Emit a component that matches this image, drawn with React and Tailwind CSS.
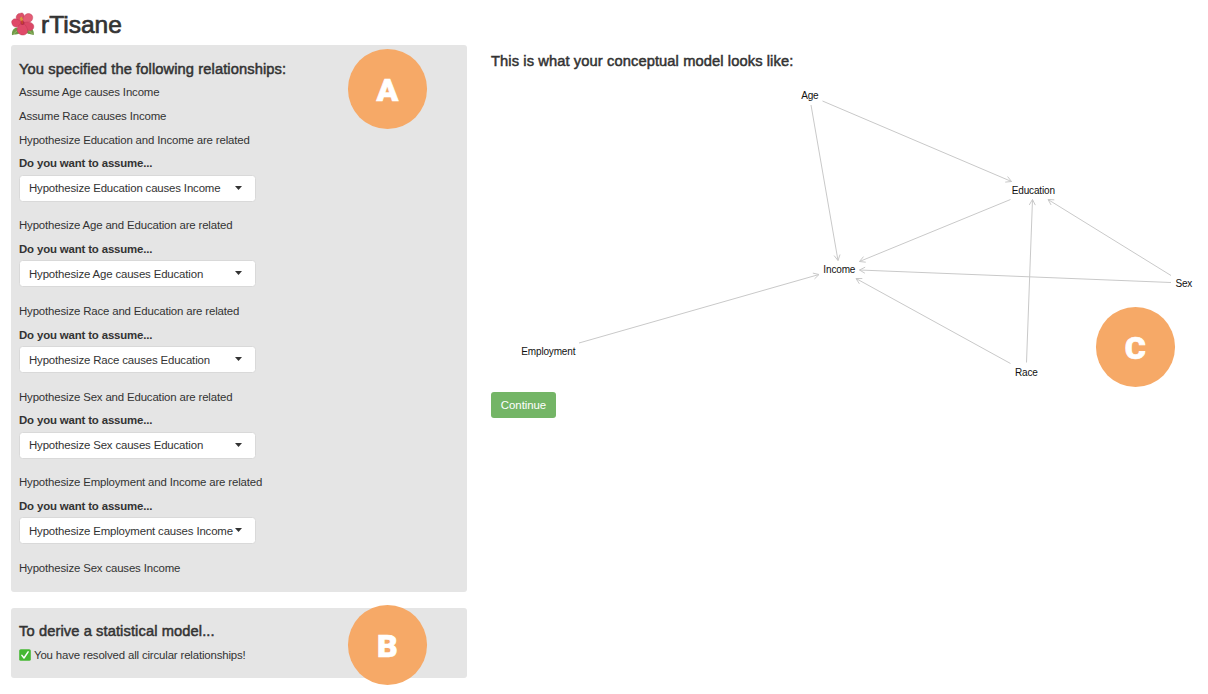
import React from "react";

const groups = [
  { text: "Hypothesize Education and Income are related", choice: "Hypothesize Education causes Income" },
  { text: "Hypothesize Age and Education are related", choice: "Hypothesize Age causes Education" },
  { text: "Hypothesize Race and Education are related", choice: "Hypothesize Race causes Education" },
  { text: "Hypothesize Sex and Education are related", choice: "Hypothesize Sex causes Education" },
  { text: "Hypothesize Employment and Income are related", choice: "Hypothesize Employment causes Income" },
];

// Diagram coordinates are relative to the canvas, whose origin is its top left corner.
const nodes = [
  { name: "Age", x: 318.8, y: 24 },
  { name: "Education", x: 542.3, y: 119 },
  { name: "Income", x: 348.3, y: 198 },
  { name: "Sex", x: 692.8, y: 212 },
  { name: "Employment", x: 57.3, y: 280 },
  { name: "Race", x: 535.3, y: 301 },
];

const edges = [
  [320, 34, 347, 189.5],
  [331.5, 30, 520.5, 110.5],
  [519.5, 128.5, 368.5, 190.5],
  [680, 204.5, 557, 128.5],
  [680, 211.5, 368.5, 199],
  [519.5, 292.5, 365, 207.5],
  [535.5, 291.5, 541.5, 128.5],
  [88, 272, 328, 203.5],
];

function arrow([x1, y1, x2, y2]) {
  const a = Math.atan2(y2 - y1, x2 - x1);
  const p = (t) => `${(x2 - 6.3 * Math.cos(a + t)).toFixed(2)} ${(y2 - 6.3 * Math.sin(a + t)).toFixed(2)}`;
  return `M${x1} ${y1}L${x2} ${y2}M${p(0.5)}L${x2} ${y2}L${p(-0.5)}`;
}

function Hibiscus() {
  return (
    <svg className="-mt-px h-6 w-6 shrink-0" viewBox="0 0 24 24">
      <path d="M1 23.2C.6 19.500 2 16 6 15.500L10 20C8 23 4.500 22 1 23.200Z" fill="#6f9a48" />
      <path d="M22.800 23C23.300 19 21.500 16.500 18 15L15 20C17.500 22.800 19.500 22 22.800 23Z" fill="#6f9a48" />
      <path d="M2.500 22L7 18M21.500 22L17.500 18" stroke="#a5c06b" strokeWidth="0.8" />
      <g stroke="#b93450" strokeWidth="0.400">
        <path d="M11 11C5.500 9 4 5.500 6 3C7 1.200 9 1.600 9.600 1.200C12 .2 13.500 2.500 13 4.500Z" fill="#dd5069" />
        <path d="M12 11C11.500 6 13.500 2 17 1.600C20.500 1.500 22.500 4 21.500 7C20.500 10.500 16.500 11.500 12 11Z" fill="#e45c75" />
        <path d="M11 11.500C8 7 3.500 5.600 1.500 8C-.2 10 1 11.500 1.500 13C3 16 8 15.500 11 12Z" fill="#df4867" />
        <path d="M12 11C16 9 21 10 22.500 13C23.600 16 21.500 18.500 19 18.500C15.500 18.500 12.500 15 12 11Z" fill="#db4766" />
        <path d="M11.500 11C7.500 12.500 5 16 6.500 19.500C8 22.500 10.500 23.500 13 23C16.500 22.200 17.500 19 16 16C15 13.500 13.500 12 11.500 11Z" fill="#df4a69" />
      </g>
      <circle cx="11.500" cy="11" r="2" fill="#b42a48" />
      <path d="M11.300 11L10.500 6" stroke="#c8472f" strokeWidth="1.800" strokeLinecap="round" />
      <path d="M8.800 6L10.800 4.500L12.200 8L9.800 9Z" fill="#d89a3c" />
    </svg>
  );
}

function CheckMark() {
  return (
    <svg className="-mt-px h-3 w-3 shrink-0" viewBox="0 0 12 12">
      <rect x="0.200" y="0.200" width="11.600" height="11.600" rx="1.600" fill="#45b833" />
      <path d="M2.900 6.400L5 9L9.100 2.900" fill="none" stroke="#fff" strokeWidth="1.500" strokeLinecap="round" strokeLinejoin="round" />
    </svg>
  );
}

function Badge({ letter, place }) {
  return (
    <div className={`absolute flex h-[79.500px] w-[79.500px] items-center justify-center rounded-full bg-[#f6a967] font-[Roboto,sans-serif] text-[32px] leading-none font-black text-white [-webkit-text-stroke:0.700px_#fff] ${place}`}>
      <span className="mt-[2px]">{letter}</span>
    </div>
  );
}

function Line({ children }) {
  return <p className="mb-[7.750px] h-4 whitespace-nowrap">{children}</p>;
}

function Group({ text, choice }) {
  return (
    <div className="mb-[15.700px]">
      <Line>{text}</Line>
      <label className="mb-[3.300px] block h-4 font-bold">Do you want to assume...</label>
      <button className="relative flex h-[27px] w-[237px] items-center rounded-[3.500px] border border-[#d9d9d9] bg-white pl-[9px] text-left whitespace-nowrap">
        {choice}
        <svg className="absolute top-[10px] right-[13.500px] h-1 w-[7px]" viewBox="0 0 7 4">
          <path d="M0 0H7L3.500 4Z" fill="#333" />
        </svg>
      </button>
    </div>
  );
}

const heading = "whitespace-nowrap text-[14.700px] leading-[18px] tracking-[0.095px] [-webkit-text-stroke:0.500px_#333]";

export default function App() {
  return (
    <div className="h-[694px] w-[1208px] overflow-hidden bg-white pl-[11px] font-['Liberation_Sans',Arial,sans-serif] text-[11.430px] leading-4 tracking-[-0.155px] text-[#333]">
      <header className="flex h-[45px] items-center gap-[6px] pt-1">
        <Hibiscus />
        <h1 className="text-[24.500px] leading-7 tracking-normal [-webkit-text-stroke:0.700px_#333]">rTisane</h1>
      </header>
      <div className="flex">
        <div className="flex w-[456px] shrink-0 flex-col gap-4">
          <section className="relative h-[547px] rounded-[3px] bg-[#e5e5e5] px-2 pt-[15px]">
            <h2 className={`${heading} mb-[6px]`}>You specified the following relationships:</h2>
            <Line>Assume Age causes Income</Line>
            <Line>Assume Race causes Income</Line>
            {groups.map((g) => (
              <Group key={g.text} {...g} />
            ))}
            <Line>Hypothesize Sex causes Income</Line>
            <Badge letter="A" place="left-[336.500px] top-[4px]" />
          </section>
          <section className="relative h-[70px] rounded-[3px] bg-[#e5e5e5] px-2 pt-[14px]">
            <h2 className={`${heading} mb-[7px]`}>To derive a statistical model...</h2>
            <p className="flex items-center gap-[3px] whitespace-nowrap">
              <CheckMark />
              You have resolved all circular relationships!
            </p>
            <Badge letter="B" place="left-[336.500px] top-[-3px]" />
          </section>
        </div>
        <main className="ml-6 w-[717px] pt-[7px]">
          <h2 className={heading}>This is what your conceptual model looks like:</h2>
          <div className="relative mt-px h-[321px] w-[717px]">
            <svg className="block h-full w-full" viewBox="0 0 717 321">
              {edges.map((e) => (
                <path key={e.join()} d={arrow(e)} fill="none" stroke="#c9c9c9" strokeWidth="1" />
              ))}
              {nodes.map((n) => (
                <text key={n.name} x={n.x} y={n.y + 4} textAnchor="middle" fontSize="10" fill="#111">
                  {n.name}
                </text>
              ))}
            </svg>
            <Badge letter="C" place="left-[604.500px] top-[236px]" />
          </div>
          <button className="flex h-[26px] w-[65px] items-center justify-center rounded-[3px] bg-[#74b566] tracking-[-0.050px] text-white">Continue</button>
        </main>
      </div>
    </div>
  );
}
